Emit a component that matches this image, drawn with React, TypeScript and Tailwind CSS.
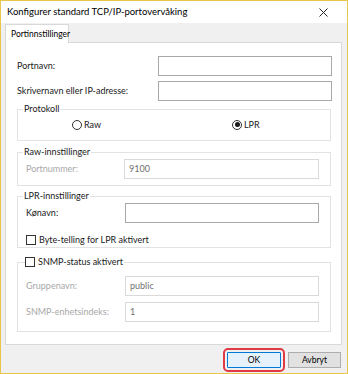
import React from 'react';

const font = { fontFamily: 'Lato, "Open Sans", sans-serif' };

function Radio({ label, checked }: { label: string; checked?: boolean }) {
  return (
    <label className="flex items-center gap-[2px] text-[9px] text-[#1a1a1a]">
      <span className="w-[10px] h-[10px] rounded-full border border-[#333] bg-white flex items-center justify-center">
        {checked && <span className="w-[5px] h-[5px] rounded-full bg-[#1a1a1a]" />}
      </span>
      {label}
    </label>
  );
}

function Check({ label }: { label: string }) {
  return (
    <label className="flex items-center gap-[3px] text-[9px] text-[#1a1a1a]">
      <span className="w-[10px] h-[10px] border border-[#333] bg-white" />
      {label}
    </label>
  );
}

function Row({ label, value, disabled, inputClass }: { label: string; value?: string; disabled?: boolean; inputClass: string }) {
  return (
    <div className="flex items-center justify-between">
      <span className={`text-[9px] ${disabled ? 'text-[#a8a8a8]' : 'text-[#1a1a1a]'}`}>{label}</span>
      <div
        className={`${inputClass} h-[20px] border bg-white flex items-center px-[4px] text-[9px] ${
          disabled ? 'border-[#d9d9d9] text-[#707070]' : 'border-[#a9a9a9] text-[#1a1a1a]'
        }`}
      >
        {value}
      </div>
    </div>
  );
}

export default function App() {
  return (
    <div className="w-[348px] h-[374px] border border-[#e8c64c] bg-[#f0f0f0] flex flex-col" style={font}>
      {/* tittellinje */}
      <div className="h-[22px] bg-white flex items-center justify-between pl-[6px] pr-[19px]">
        <span className="text-[9.5px] text-black">Konfigurer standard TCP/IP-portovervåking</span>
        <svg width="9" height="9" viewBox="0 0 9 9">
          <path d="M0.5 0.5 L8.5 8.5 M8.5 0.5 L0.5 8.5" stroke="#222" strokeWidth="1" />
        </svg>
      </div>

      <div className="flex flex-col pl-[4px] pr-[5px] pt-[1px]">
        {/* fane */}
        <div className="flex">
          <div className="w-[64px] h-[19px] bg-white border border-b-0 border-[#d9d9d9] flex items-center pl-[5px] text-[8.5px] text-black -mb-[1px] relative z-10">
            Portinnstillinger
          </div>
        </div>

        <div className="h-[303px] bg-white border border-[#d9d9d9] flex flex-col pl-[11px] pr-[9px] pt-[13px]">
          <div className="flex flex-col gap-[5px]">
            <Row label="Portnavn:" inputClass="w-[174px]" />
            <Row label="Skrivernavn eller IP-adresse:" inputClass="w-[174px]" />
          </div>

          <fieldset className="mt-[2px] h-[38px] border border-[#e3e3e3] mr-[1px]">
            <legend className="ml-[5px] px-[1px] text-[9px] text-[#1a1a1a] leading-[12px]">Protokoll</legend>
            <div className="flex pl-[54px] pt-[3px]">
              <div className="w-[160px]"><Radio label="Raw" /></div>
              <Radio label="LPR" checked />
            </div>
          </fieldset>

          <fieldset className="mt-[5px] h-[40px] border border-[#e3e3e3] mr-[1px]">
            <legend className="ml-[5px] px-[1px] text-[9px] text-[#1a1a1a] leading-[12px]">Raw-innstillinger</legend>
            <div className="pt-[1px] pl-[8px] pr-[11px]">
              <Row label="Portnummer:" value="9100" disabled inputClass="w-[195px]" />
            </div>
          </fieldset>

          <fieldset className="mt-[4px] h-[58px] border border-[#e3e3e3] mr-[1px]">
            <legend className="ml-[5px] px-[1px] text-[9px] text-[#1a1a1a] leading-[12px]">LPR-innstillinger</legend>
            <div className="flex flex-col gap-[10px] pt-[1px] pl-[8px] pr-[11px]">
              <Row label="Kønavn:" inputClass="w-[194px]" />
              <Check label="Byte-telling for LPR aktivert" />
            </div>
          </fieldset>

          <fieldset className="mt-[8px] h-[76px] border border-[#e3e3e3] mr-[1px]">
            <legend className="ml-[7px] pr-[1px] leading-[12px]">
              <Check label="SNMP-status aktivert" />
            </legend>
            <div className="flex flex-col gap-[6px] pt-[8px] pl-[8px] pr-[11px]">
              <Row label="Gruppenavn:" value="public" disabled inputClass="w-[194px]" />
              <Row label="SNMP-enhetsindeks:" value="1" disabled inputClass="w-[194px]" />
            </div>
          </fieldset>
        </div>

        {/* knapper */}
        <div className="flex justify-end items-center gap-[7px] pt-[7px] pr-[1px]">
          <button className="w-[54px] h-[16px] border border-[#0078d7] bg-[#e5f1fb] text-[8.5px] text-black rounded-[1px] outline-2 outline-[#e03a45] outline-offset-[2px]">
            OK
          </button>
          <button className="w-[53px] h-[16px] border border-[#adadad] bg-[#e1e1e1] text-[8.5px] text-black">
            Avbryt
          </button>
        </div>
      </div>
    </div>
  );
}
